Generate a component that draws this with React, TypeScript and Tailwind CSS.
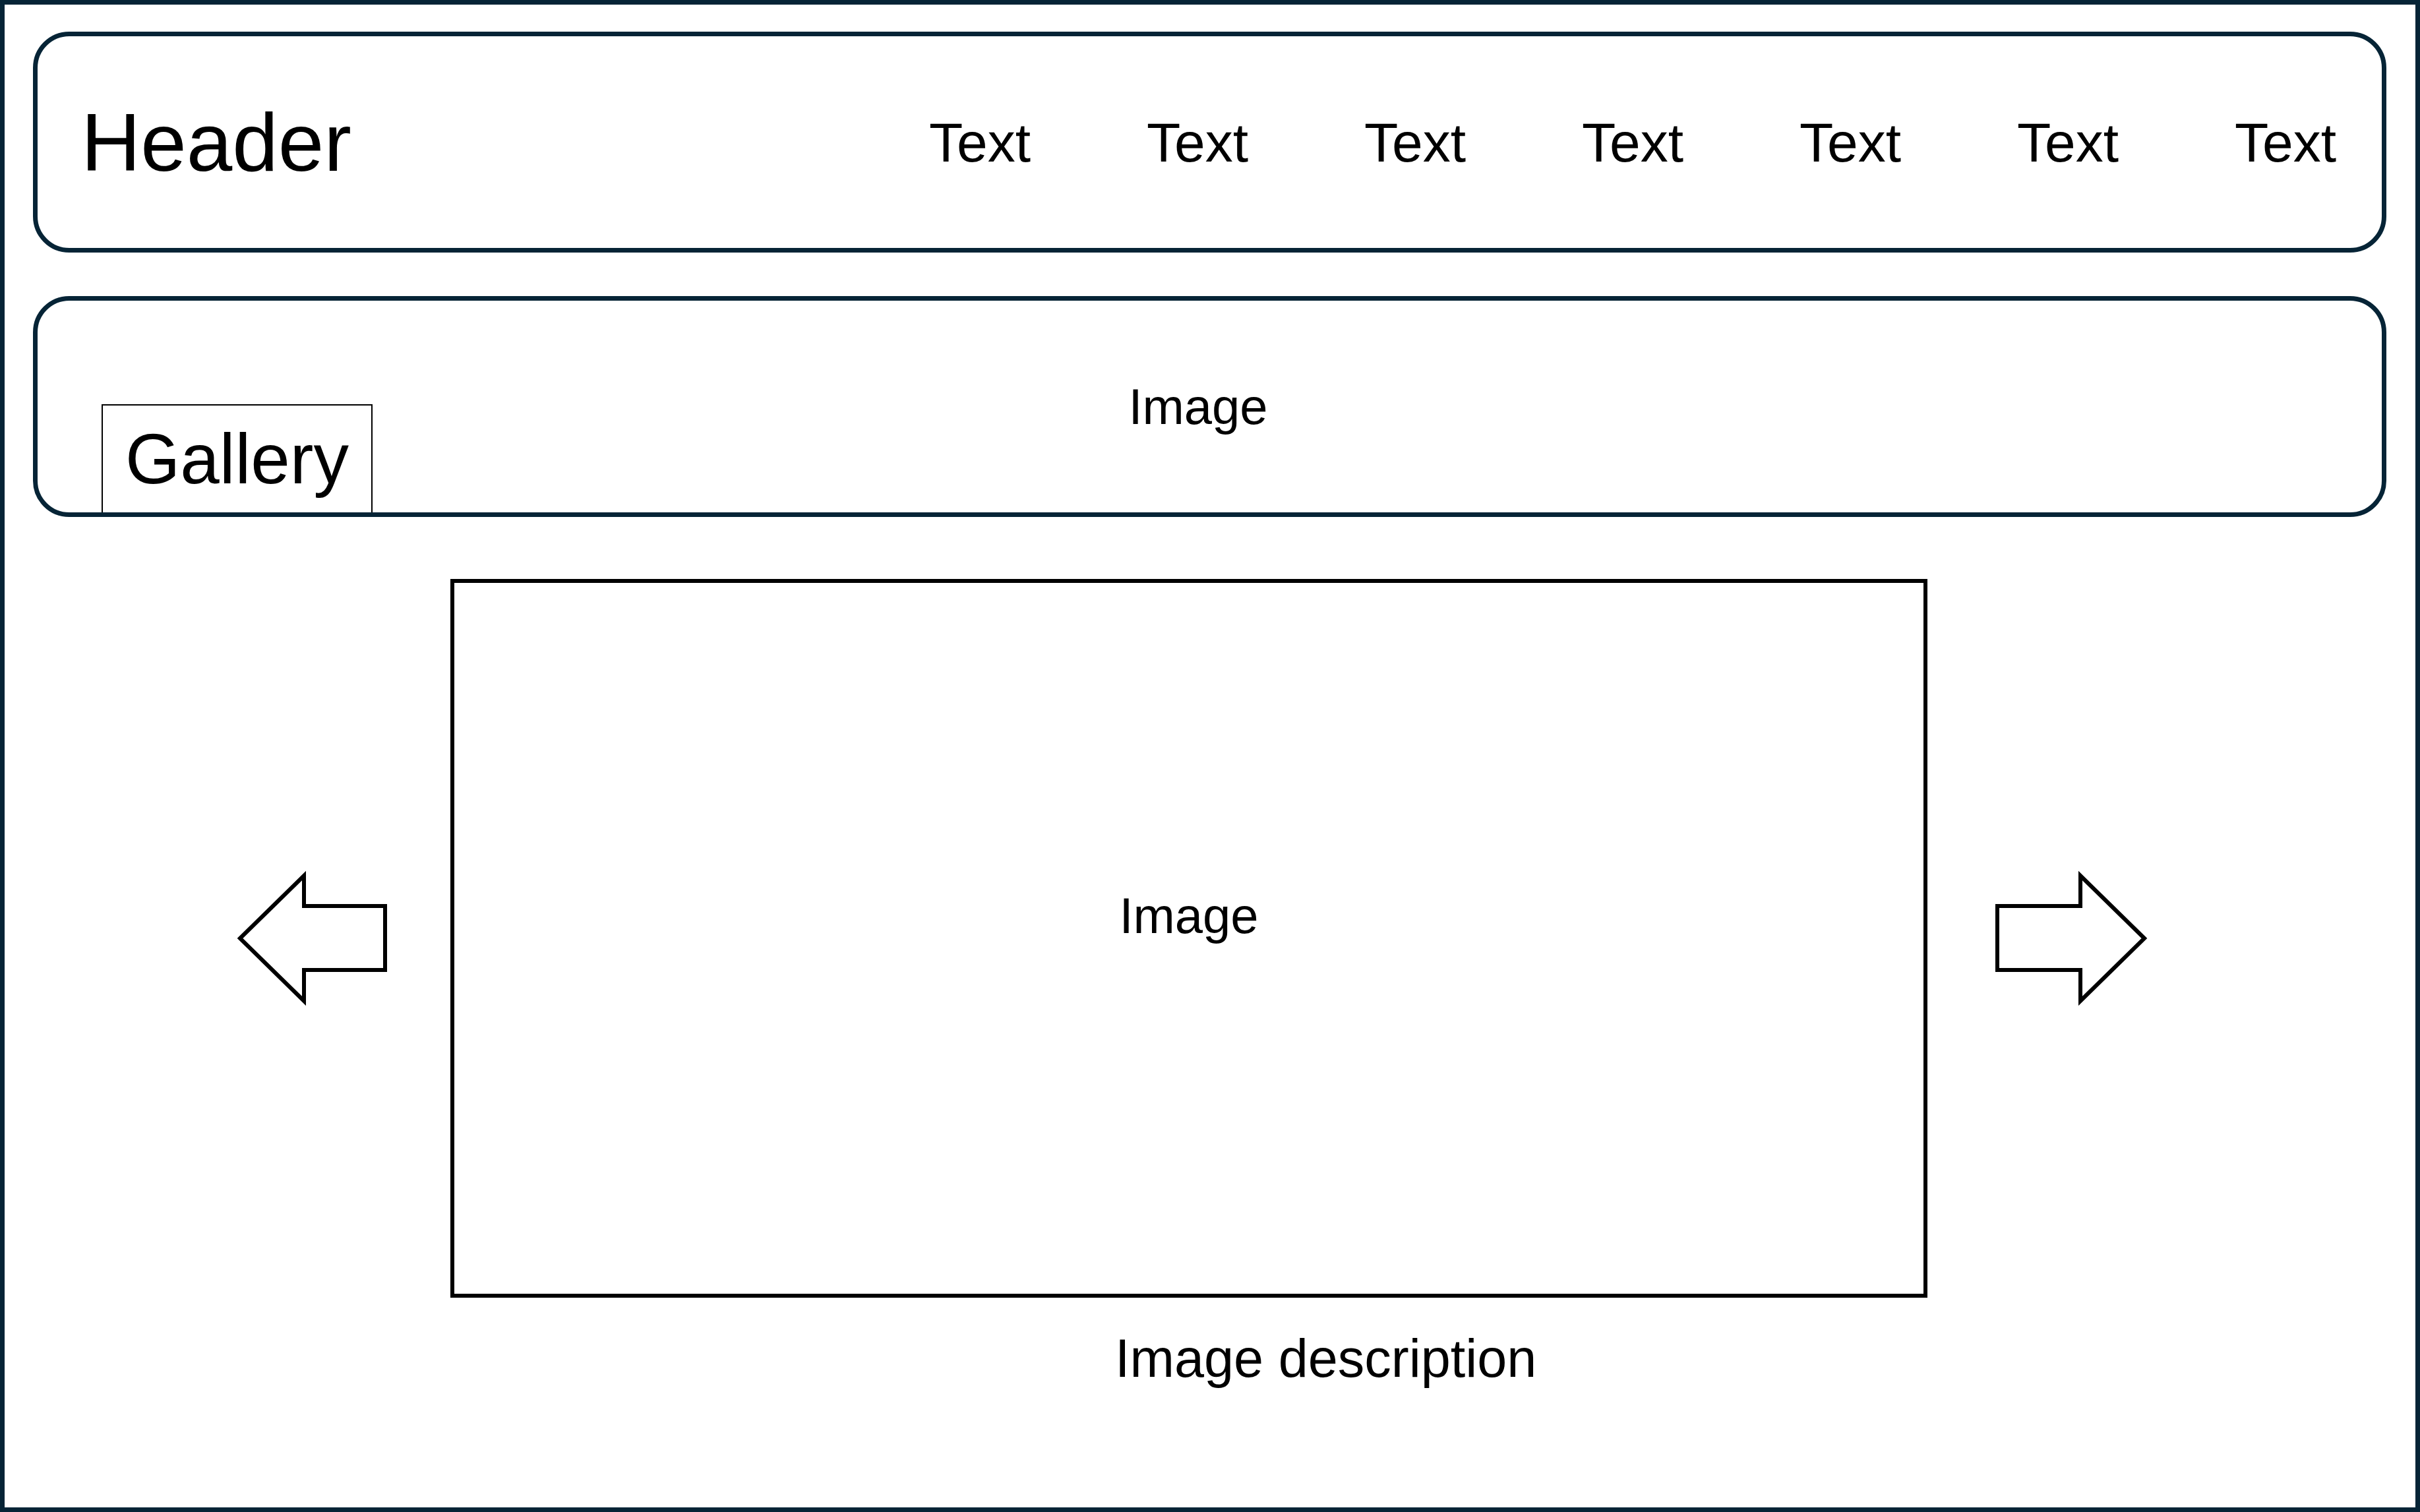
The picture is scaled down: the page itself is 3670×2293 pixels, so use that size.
import React from 'react';

const NAV_ITEMS = ['Text', 'Text', 'Text', 'Text', 'Text', 'Text', 'Text'];

// Block arrow drawn as an outline, pointing left or right
function BlockArrow({ direction }: { direction: 'left' | 'right' }) {
  const points =
    direction === 'left'
      ? '9,107 106,12 106,58 229,58 229,155 106,155 106,202'
      : '229,107 132,12 132,58 6,58 6,155 132,155 132,202';
  return (
    <svg width="236" height="214" viewBox="0 0 236 214" className="shrink-0">
      <polygon points={points} fill="white" stroke="black" strokeWidth="6" strokeLinejoin="miter" />
    </svg>
  );
}

export default function App() {
  return (
    <div className="w-full h-screen bg-white border-[7px] border-[#062436] font-['Liberation_Sans',Arial,sans-serif] text-black overflow-hidden">
      <div className="pt-[41px] pl-[43px] pr-[44px]">
        {/* Header */}
        <header className="h-[335px] border-[7px] border-[#062436] rounded-[55px] flex items-center pl-[66px] pr-[69px]">
          <h1 className="text-[125px] leading-none font-normal">Header</h1>
          <nav className="ml-auto flex items-center">
            {NAV_ITEMS.map((item, i) => (
              <span
                key={i}
                className={i < NAV_ITEMS.length - 1 ? 'w-[330px] text-[84px] leading-none' : 'text-[84px] leading-none'}
              >
                {item}
              </span>
            ))}
          </nav>
        </header>

        {/* Gallery banner */}
        <section className="relative mt-[66px] h-[335px] border-[7px] border-[#062436] rounded-[55px] flex items-center justify-center pr-[35px]">
          <span className="text-[76px] leading-none">Image</span>
          <div className="absolute left-[97px] bottom-0 w-[411px] h-[164px] border-2 border-b-0 border-black bg-white flex items-center justify-center">
            <span className="text-[107px] leading-none">Gallery</span>
          </div>
        </section>
      </div>

      {/* Slider */}
      <div className="mt-[94px] pl-[348px] flex items-center">
        <BlockArrow direction="left" />
        <div className="ml-[92px] w-[2240px] h-[1090px] border-[6px] border-black flex items-center justify-center pb-[68px]">
          <span className="text-[76px] leading-none">Image</span>
        </div>
        <div className="ml-[100px]">
          <BlockArrow direction="right" />
        </div>
      </div>

      <p className="mt-[52px] ml-[1684px] text-[81px] leading-none">Image description</p>
    </div>
  );
}
